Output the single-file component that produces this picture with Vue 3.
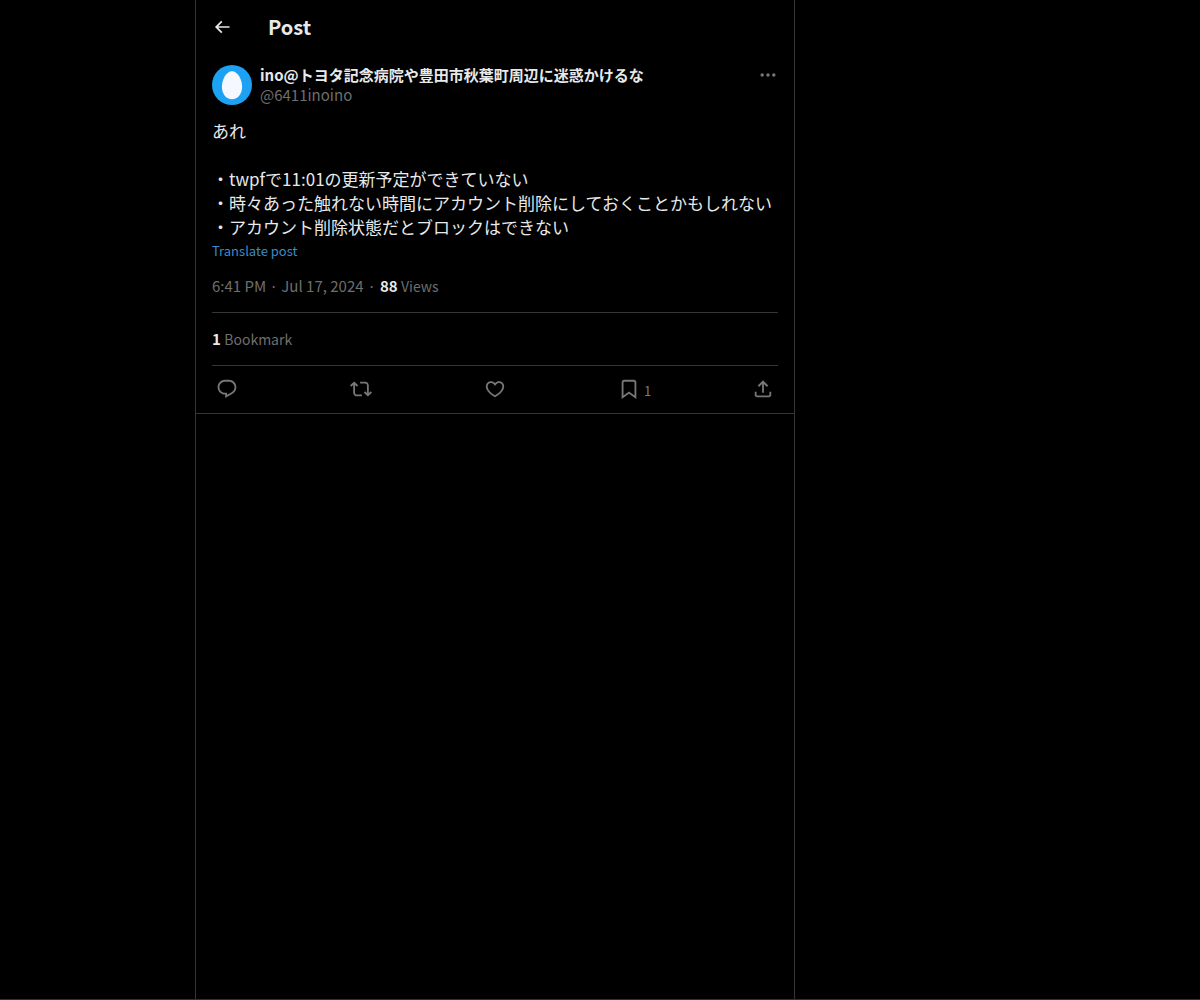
<template>
  <div class="page">
    <main class="column">
      <header class="top-bar">
        <button class="icon-btn back-btn" type="button" aria-label="Back">
          <svg viewBox="0 0 24 24" class="back-icon">
            <path d="M7.414 13l5.043 5.04-1.414 1.42L3.586 12l7.457-7.46 1.414 1.42L7.414 11H21v2H7.414z" />
          </svg>
        </button>
        <h1 class="heading">Post</h1>
      </header>

      <article class="post">
        <div class="author">
          <svg class="avatar" viewBox="0 0 40 40" aria-hidden="true">
            <circle cx="20" cy="20" r="20" fill="#1da1f2" />
            <path d="M20 6.200C25.700 6.200 30.100 14.500 30.100 21.500C30.100 29 25.900 34.300 20 34.300C14.100 34.300 9.900 29 9.900 21.500C9.900 14.500 14.300 6.200 20 6.200Z" fill="#f5f8fe" />
          </svg>
          <div class="names">
            <a class="name" href="#">{{ post.name }}</a>
            <a class="handle" href="#">{{ post.handle }}</a>
          </div>
          <button class="icon-btn more-btn" type="button" aria-label="More">
            <svg viewBox="0 0 24 24" class="more-icon">
              <path d="M3 12c0-1.100.9-2 2-2s2 .9 2 2-.9 2-2 2-2-.9-2-2zm9 2c1.100 0 2-.9 2-2s-.9-2-2-2-2 .9-2 2 .9 2 2 2zm7 0c1.100 0 2-.9 2-2s-.9-2-2-2-2 .9-2 2 .9 2 2 2z" />
            </svg>
          </button>
        </div>

        <p class="text">{{ post.text }}</p>
        <button class="translate" type="button">Translate post</button>

        <div class="meta">
          <a href="#">6:41 PM · Jul 17, 2024</a>
          <span class="dot">·</span>
          <span><strong>{{ post.views }}</strong> <span class="unit">Views</span></span>
        </div>

        <div class="stats">
          <strong>{{ post.bookmarks }}</strong> <span class="unit">Bookmark</span>
        </div>

        <div class="actions">
          <button
            v-for="action in actions"
            :key="action.label"
            class="icon-btn action"
            type="button"
            :aria-label="action.label"
          >
            <svg viewBox="0 0 24 24" class="action-icon">
              <path :d="action.path" />
            </svg>
            <span v-if="action.count" class="count">{{ action.count }}</span>
          </button>
        </div>
      </article>
    </main>
  </div>
</template>

<script setup>
const post = {
  name: "ino@トヨタ記念病院や豊田市秋葉町周辺に迷惑かけるな",
  handle: "@6411inoino",
  text: `あれ

・twpfで11:01の更新予定ができていない
・時々あった触れない時間にアカウント削除にしておくことかもしれない
・アカウント削除状態だとブロックはできない`,
  views: 88,
  bookmarks: 1,
};

const actions = [
  {
    label: "Reply",
    path: "M1.751 10c0-4.420 3.584-8 8.005-8h4.366c4.490 0 8.129 3.640 8.129 8.130 0 2.960-1.607 5.680-4.196 7.110l-8.054 4.460v-3.690h-.067c-4.490.1-8.183-3.510-8.183-8.010zm8.005-6c-3.317 0-6.005 2.690-6.005 6 0 3.370 2.770 6.080 6.138 6.010l.351-.010h1.761v2.300l5.087-2.810c1.951-1.080 3.163-3.130 3.163-5.360 0-3.390-2.744-6.130-6.129-6.130H9.756z",
  },
  {
    label: "Repost",
    path: "M4.500 3.880l4.432 4.140-1.364 1.460L5.500 7.550V16c0 1.100.896 2 2 2H13v2H7.500c-2.209 0-4-1.790-4-4V7.550L1.432 9.480.068 8.020 4.500 3.880zM16.500 6H11V4h5.500c2.209 0 4 1.790 4 4v8.450l2.068-1.930 1.364 1.460-4.432 4.140-4.432-4.140 1.364-1.460 2.068 1.930V8c0-1.100-.896-2-2-2z",
  },
  {
    label: "Like",
    path: "M16.697 5.500c-1.222-.060-2.679.510-3.890 2.160l-.805 1.090-.806-1.090C9.984 6.010 8.526 5.440 7.304 5.500c-1.243.070-2.349.780-2.910 1.910-.552 1.120-.633 2.780.479 4.820 1.074 1.970 3.257 4.270 7.129 6.610 3.870-2.340 6.052-4.640 7.126-6.610 1.111-2.040 1.030-3.700.477-4.820-.561-1.130-1.666-1.840-2.908-1.910zm4.187 7.690c-1.351 2.480-4.001 5.120-8.379 7.670l-.503.300-.504-.300c-4.379-2.550-7.029-5.190-8.382-7.670-1.360-2.500-1.410-4.860-.514-6.670.887-1.790 2.647-2.910 4.601-3.010 1.651-.090 3.368.560 4.798 2.010 1.429-1.450 3.146-2.100 4.796-2.010 1.954.100 3.714 1.220 4.601 3.010.896 1.810.846 4.170-.514 6.670z",
  },
  {
    label: "Bookmark",
    count: post.bookmarks,
    path: "M4 4.500C4 3.120 5.119 2 6.500 2h11C18.881 2 20 3.120 20 4.500v18.440l-8-5.710-8 5.710V4.500zM6.500 4c-.276 0-.5.220-.5.500v14.560l6-4.290 6 4.290V4.500c0-.280-.224-.500-.5-.500h-11z",
  },
  {
    label: "Share",
    path: "M12 2.590l5.700 5.700-1.410 1.420L13 6.410V16h-2V6.410l-3.300 3.300-1.410-1.420L12 2.590zM21 15l-.020 3.510c0 1.380-1.120 2.490-2.500 2.490H5.500C4.110 21 3 19.880 3 18.500V15h2v3.500c0 .280.220.500.500.500h12.980c.280 0 .500-.220.500-.500L19 15h2z",
  },
];
</script>

<style>
body {
  margin: 0;
  background: #000;
}
</style>

<style scoped>
.page {
  display: grid;
  grid-template-columns: minmax(0, 195px) minmax(0, 600px) minmax(0, 1fr);
  box-sizing: border-box;
  min-height: 100vh;
  border-bottom: 1px solid #333132;
  background: #000;
  color: #e7e9ea;
  font-family: "Noto Sans CJK JP", sans-serif;
  font-size: 15px;
  line-height: 20px;
}

.column {
  grid-column: 2;
  border-left: 1px solid #353535;
  border-right: 1px solid #353535;
}

a {
  color: inherit;
  text-decoration: none;
}

strong {
  color: #e7e9ea;
  font-weight: 700;
}

svg {
  display: block;
}

.icon-btn {
  display: flex;
  align-items: center;
  justify-content: center;
  padding: 0;
  border: none;
  background: none;
  color: inherit;
  font: inherit;
  cursor: pointer;
}

.icon-btn svg {
  fill: currentColor;
}

.top-bar {
  display: flex;
  align-items: center;
  gap: 36px;
  height: 53px;
  padding: 0 16px;
}

.back-icon {
  width: 20px;
  height: 20px;
}

.heading {
  margin: 0;
  font-size: 20px;
  font-weight: 700;
  line-height: 24px;
}

.post {
  padding: 12px 16px 0;
  border-bottom: 1px solid #353535;
}

.author {
  display: flex;
  align-items: flex-start;
  gap: 8px;
}

.avatar {
  flex: none;
  width: 40px;
  height: 40px;
}

.names {
  display: flex;
  flex: 1;
  flex-direction: column;
  min-width: 0;
}

.name {
  font-weight: 700;
}

.handle,
.meta,
.stats {
  color: #6e6e6e;
}

.more-btn,
.action {
  color: #777;
}

.more-btn {
  width: 20px;
  height: 20px;
}

.more-icon {
  width: 20px;
  height: 20px;
}

.text {
  margin: 14px 0 0;
  font-size: 17px;
  line-height: 24px;
  white-space: pre-wrap;
}

.translate {
  display: block;
  padding: 0;
  border: none;
  background: none;
  color: #3b8ac9;
  font-family: inherit;
  font-size: 13px;
  line-height: 24px;
  cursor: pointer;
}

.meta {
  display: flex;
  padding: 13px 0 16px;
}

.dot {
  padding: 0 4px;
}

.unit {
  font-size: 14px;
}

.stats {
  padding: 16px 0;
  border-top: 1px solid #353535;
  border-bottom: 1px solid #353535;
}

.actions {
  display: flex;
  justify-content: space-between;
  height: 45px;
  padding-bottom: 2px;
}

.action {
  position: relative;
  width: 30px;
}

.action-icon {
  width: 22px;
  height: 22px;
}

.count {
  position: absolute;
  left: 100%;
  padding-top: 4px;
  font-size: 13px;
}
</style>
